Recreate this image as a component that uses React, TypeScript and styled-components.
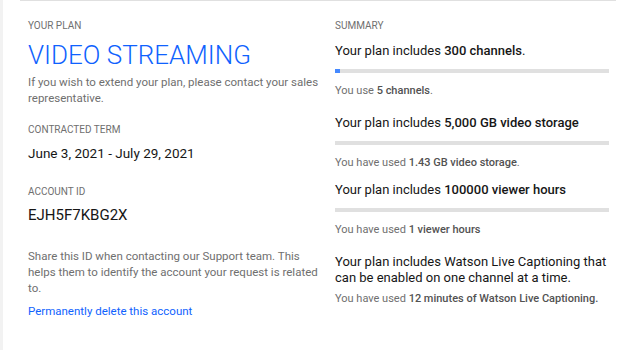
import React from "react";
import styled, { createGlobalStyle } from "styled-components";

const GlobalStyle = createGlobalStyle`
  html, body {
    margin: 0;
    padding: 0;
    background: #ffffff;
  }
  body {
    font-family: Roboto, "Noto Sans", "Liberation Sans", sans-serif;
    color: #161616;
  }
`;

const Page = styled.div`
  display: flex;
  height: 350px;
  overflow: hidden;
`;

const SideStrip = styled.div`
  width: 3px;
  flex-shrink: 0;
  background: #f2f2f2;
`;

const Content = styled.div`
  margin-left: 17px;
  width: 596px;
  border-top: 1px solid #e0e0e0;
  padding: 18px 7px 0 8px;
  box-sizing: border-box;
  display: grid;
  grid-template-columns: 291px 274px;
  column-gap: 16px;
  align-items: start;
`;

const Column = styled.div`
  display: flex;
  flex-direction: column;
`;

const Label = styled.div<{ $gap?: number }>`
  font-size: 10px;
  line-height: 14px;
  text-transform: uppercase;
  color: #6f6f6f;
  margin-top: ${(p) => p.$gap ?? 0}px;
`;

const PlanName = styled.h1`
  margin: 6px 0 0;
  font-size: 26px;
  line-height: 32px;
  font-weight: 300;
  color: #0f62fe;
`;

const Helper = styled.p<{ $gap?: number }>`
  margin: ${(p) => p.$gap ?? 0}px 0 0;
  font-size: 11.5px;
  line-height: 16px;
  color: #6f6f6f;

  strong {
    font-weight: 500;
    color: #525252;
  }
`;

const Value = styled.div<{ $size?: number; $gap?: number }>`
  margin-top: ${(p) => p.$gap ?? 6}px;
  font-size: ${(p) => p.$size ?? 13.5}px;
  line-height: 20px;
  color: #161616;
`;

const DeleteLink = styled.a`
  margin-top: 7px;
  font-size: 11.5px;
  line-height: 16px;
  color: #0f62fe;
  text-decoration: none;
  cursor: pointer;
`;

const Usage = styled.div<{ $gap: number }>`
  display: flex;
  flex-direction: column;
  margin-top: ${(p) => p.$gap}px;
`;

const UsageTitle = styled.div`
  font-size: 13px;
  line-height: 16px;
  color: #161616;

  strong {
    font-weight: 500;
  }
`;

const Track = styled.div`
  margin-top: 10px;
  height: 4px;
  background: #e0e0e0;
`;

const Fill = styled.div`
  height: 100%;
  background: #4589ff;
`;

const UsageNote = styled(Helper)`
  font-size: 11px;
  margin-top: ${(p) => p.$gap ?? 10}px;
`;

type UsageRowProps = {
  gap: number;
  title: React.ReactNode;
  note: React.ReactNode;
  percent?: number;
  noteGap?: number;
};

const UsageRow = ({ gap, title, note, percent, noteGap }: UsageRowProps) => (
  <Usage $gap={gap}>
    <UsageTitle>{title}</UsageTitle>
    {percent !== undefined && (
      <Track>
        <Fill style={{ width: `${percent}%` }} />
      </Track>
    )}
    <UsageNote $gap={noteGap}>{note}</UsageNote>
  </Usage>
);

export default function App() {
  return (
    <>
      <GlobalStyle />
      <Page>
        <SideStrip />
        <Content>
          <Column>
            <Label>Your plan</Label>
            <PlanName>VIDEO STREAMING</PlanName>
            <Helper $gap={3}>
              If you wish to extend your plan, please contact your sales
              representative.
            </Helper>
            <Label $gap={17}>Contracted term</Label>
            <Value $gap={6}>June 3, 2021 - July 29, 2021</Value>
            <Label $gap={22}>Account ID</Label>
            <Value $size={15} $gap={6}>
              EJH5F7KBG2X
            </Value>
            <Helper $gap={23}>
              Share this ID when contacting our Support team. This helps them
              to identify the account your request is related to.
            </Helper>
            <DeleteLink>Permanently delete this account</DeleteLink>
          </Column>
          <Column>
            <Label>Summary</Label>
            <UsageRow
              gap={10}
              percent={1.7}
              title={
                <>
                  Your plan includes <strong>300 channels</strong>.
                </>
              }
              note={
                <>
                  You use <strong>5 channels</strong>.
                </>
              }
            />
            <UsageRow
              gap={16}
              percent={0}
              title={
                <>
                  Your plan includes <strong>5,000 GB video storage</strong>
                </>
              }
              note={
                <>
                  You have used <strong>1.43 GB video storage</strong>.
                </>
              }
            />
            <UsageRow
              gap={11}
              percent={0}
              title={
                <>
                  Your plan includes <strong>100000 viewer hours</strong>
                </>
              }
              note={
                <>
                  You have used <strong>1 viewer hours</strong>
                </>
              }
            />
            <UsageRow
              gap={16}
              noteGap={5}
              title="Your plan includes Watson Live Captioning that can be enabled on one channel at a time."
              note={
                <>
                  You have used{" "}
                  <strong>12 minutes of Watson Live Captioning.</strong>
                </>
              }
            />
          </Column>
        </Content>
      </Page>
    </>
  );
}
